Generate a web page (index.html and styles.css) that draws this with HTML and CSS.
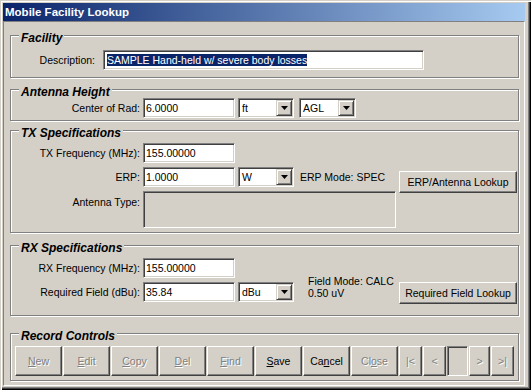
FILE: index.html
```html
<!DOCTYPE html>
<html lang="en">
<head>
    <meta charset="UTF-8">
    <title>Mobile Facility Lookup</title>
    <link rel="stylesheet" href="styles.css">
</head>
<body>

<div class="window">
    <div class="titlebar">Mobile Facility Lookup</div>

    <div class="panel">

        <div class="group g-facility">
            <span class="legend">Facility</span>
            <div class="row">
                <span class="lbl lbl-desc">Description:</span>
                <div class="edit edit-desc"><span class="sel">SAMPLE Hand-held w/ severe body losses</span></div>
            </div>
        </div>

        <div class="group g-antenna">
            <span class="legend">Antenna Height</span>
            <div class="row">
                <span class="lbl">Center of Rad:</span>
                <div class="edit edit-num">6.0000</div>
                <div class="combo"><span class="combo-text">ft</span><span class="drop"><svg width="7" height="4" viewBox="0 0 7 4"><polygon points="0,0 7,0 3.5,4" fill="#000"/></svg></span></div>
                <div class="combo combo-agl"><span class="combo-text">AGL</span><span class="drop"><svg width="7" height="4" viewBox="0 0 7 4"><polygon points="0,0 7,0 3.5,4" fill="#000"/></svg></span></div>
            </div>
        </div>

        <div class="group g-tx">
            <span class="legend">TX Specifications</span>
            <div class="row">
                <span class="lbl">TX Frequency (MHz):</span>
                <div class="edit edit-num">155.00000</div>
            </div>
            <div class="row">
                <span class="lbl">ERP:</span>
                <div class="edit edit-num">1.0000</div>
                <div class="combo"><span class="combo-text">W</span><span class="drop"><svg width="7" height="4" viewBox="0 0 7 4"><polygon points="0,0 7,0 3.5,4" fill="#000"/></svg></span></div>
                <span class="mode">ERP Mode: SPEC</span>
                <button class="btn btn-lookup btn-erp">ERP/Antenna Lookup</button>
            </div>
            <div class="row row-tall">
                <span class="lbl lbl-top">Antenna Type:</span>
                <div class="edit edit-box"></div>
            </div>
        </div>

        <div class="group g-rx">
            <span class="legend">RX Specifications</span>
            <div class="row">
                <span class="lbl">RX Frequency (MHz):</span>
                <div class="edit edit-num">155.00000</div>
            </div>
            <div class="row">
                <span class="lbl">Required Field (dBu):</span>
                <div class="edit edit-num">35.84</div>
                <div class="combo"><span class="combo-text">dBu</span><span class="drop"><svg width="7" height="4" viewBox="0 0 7 4"><polygon points="0,0 7,0 3.5,4" fill="#000"/></svg></span></div>
                <span class="mode mode-field">Field Mode: CALC<br>0.50 uV</span>
                <button class="btn btn-lookup">Required Field Lookup</button>
            </div>
        </div>

        <div class="group g-record">
            <span class="legend">Record Controls</span>
            <div class="row record-row">
                <button class="btn rbtn off"><u>N</u>ew</button>
                <button class="btn rbtn off"><u>E</u>dit</button>
                <button class="btn rbtn off"><u>C</u>opy</button>
                <button class="btn rbtn off"><u>D</u>el</button>
                <button class="btn rbtn off"><u>F</u>ind</button>
                <button class="btn rbtn"><u>S</u>ave</button>
                <button class="btn rbtn">Ca<u>n</u>cel</button>
                <button class="btn rbtn off">Cl<u>o</u>se</button>
                <button class="btn nbtn off">|&lt;</button>
                <button class="btn nbtn off">&lt;</button>
                <div class="edit edit-nav"></div>
                <button class="btn nbtn nbtn-s off">&gt;</button>
                <button class="btn nbtn off">&gt;|</button>
            </div>
        </div>

    </div>
</div>

</body>
</html>
```

FILE: styles.css
```css
body {
    margin: 0;
    font-family: "Liberation Sans", Arial, sans-serif;
    font-size: 10.5px;
    background-color: #d4d0c8;
}

.window {
    width: 531px;
    height: 390px;
    box-sizing: border-box;
    padding: 3px 6px 4px 3px;
    background-color: #d4d0c8;
    box-shadow: inset 1px 1px 0 #d4d0c8, inset 2px 2px 0 #fff,
                inset -1px -1px 0 #000, inset -2px -2px 0 #404040, inset -3px -3px 0 #808080;
}

.titlebar {
    height: 18px;
    line-height: 18px;
    padding-left: 2px;
    color: white;
    font-size: 11.5px;
    font-weight: bold;
    background: linear-gradient(to right, #0a246a, #a6caf0);
}

.panel {
    height: 365px;
    box-sizing: border-box;
    border: 1px solid;
    border-color: #808080 #fff #fff #808080;
    padding: 1px;
}

/* etched group boxes */
.group {
    position: relative;
    box-sizing: border-box;
    margin: 0 4px 0 5px;
    border: 1px solid #808080;
    box-shadow: inset 1px 1px 0 #fff, 1px 1px 0 #fff;
}

.legend {
    position: absolute;
    left: 8px;
    top: -5px;
    padding: 0 2px;
    background-color: #d4d0c8;
    font-size: 12px;
    line-height: 14px;
    font-weight: bold;
    font-style: italic;
}

.g-facility { margin-top: 12px; height: 43px; padding-top: 14px; }
.g-antenna { margin-top: 11px; height: 32px; padding-top: 8px; }
.g-tx { margin-top: 9px; height: 103px; padding-top: 12px; }
.g-rx { margin-top: 12px; height: 71px; padding-top: 12px; }
.g-record { margin-top: 17px; height: 48px; padding-top: 12px; }

.row {
    display: flex;
    align-items: center;
    height: 20px;
    margin-bottom: 4px;
}

.row-tall {
    height: 37px;
    align-items: flex-start;
}

.lbl {
    width: 129px;
    margin-right: 3px;
    text-align: right;
    flex-shrink: 0;
}

.lbl-desc { width: 84px; margin-right: 8px; }
.lbl-top { margin-top: 5px; }

/* sunken edit fields */
.edit {
    height: 20px;
    box-sizing: border-box;
    padding: 0 2px;
    line-height: 18px;
    background-color: white;
    border: 1px solid;
    border-color: #808080 #fff #fff #808080;
    box-shadow: inset 1px 1px 0 #404040, inset -1px -1px 0 #d4d0c8;
    white-space: nowrap;
    flex-shrink: 0;
}

.edit-desc { width: 321px; padding-left: 3px; }
.edit-num { width: 92px; }

.edit-box {
    width: 253px;
    height: 37px;
    background-color: #d4d0c8;
}

.edit-nav {
    width: 21px;
    height: 30px;
    margin-right: 1px;
    background-color: #d4d0c8;
}

.sel {
    background-color: #0a246a;
    color: white;
}

.combo {
    display: flex;
    width: 56px;
    height: 20px;
    box-sizing: border-box;
    margin-left: 3px;
    padding: 1px;
    background-color: white;
    border: 1px solid;
    border-color: #808080 #fff #fff #808080;
    box-shadow: inset 1px 1px 0 #404040, inset -1px -1px 0 #d4d0c8;
    flex-shrink: 0;
}

.combo-agl { width: 57px; margin-left: 5px; }

.combo-text {
    flex: 1;
    padding-left: 2px;
    line-height: 16px;
}

.drop {
    width: 16px;
    height: 16px;
    box-sizing: border-box;
    display: flex;
    align-items: center;
    justify-content: center;
    background-color: #d4d0c8;
    border: 1px solid;
    border-color: #d4d0c8 #404040 #404040 #d4d0c8;
    box-shadow: inset 1px 1px 0 #fff, inset -1px -1px 0 #808080;
}

.mode {
    margin-left: 6px;
    white-space: nowrap;
}

.mode-field {
    align-self: flex-start;
    margin-left: 14px;
    margin-top: -7px;
    line-height: 12px;
}

/* raised buttons */
.btn {
    box-sizing: border-box;
    padding: 0;
    font-family: "Liberation Sans", Arial, sans-serif;
    font-size: 10.5px;
    color: black;
    background-color: #d4d0c8;
    border: 1px solid;
    border-color: #fff #404040 #404040 #fff;
    box-shadow: inset -1px -1px 0 #808080;
    flex-shrink: 0;
}

.btn-lookup {
    width: 118px;
    height: 22px;
    margin-left: auto;
    margin-right: 1px;
    align-self: flex-start;
}

.btn-erp { margin-top: 4px; }

.record-row {
    height: 30px;
    padding-left: 4px;
}

.rbtn {
    width: 47px;
    height: 30px;
    margin-right: 1px;
}

.nbtn {
    width: 23px;
    height: 30px;
    margin-right: 1px;
}

.nbtn-s { width: 21px; }

.off {
    color: #808080;
    text-shadow: 1px 1px 0 #fff;
}
```
